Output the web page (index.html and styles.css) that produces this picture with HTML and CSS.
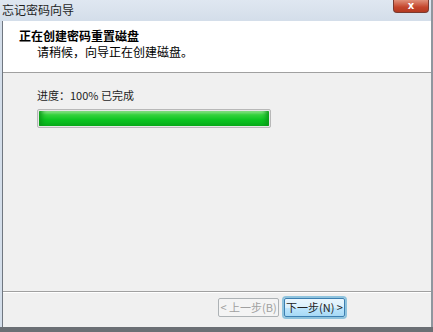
FILE: index.html
```html
<!DOCTYPE html>
<html>
<head>
<meta charset="utf-8">
<link rel="stylesheet" href="styles.css">
</head>
<body>
<div class="window">
  <div class="titlebar">
    <span class="title">忘记密码向导</span>
    <div class="close"><span>x</span></div>
  </div>
  <div class="frame">
    <div class="header">
      <div class="h-title">正在创建密码重置磁盘</div>
      <div class="h-sub">请稍候，向导正在创建磁盘。</div>
    </div>
    <div class="content">
      <div class="label">进度：100% 已完成</div>
      <div class="bar"><div class="fill"></div></div>
    </div>
    <div class="footer">
      <div class="btn disabled">&lt; 上一步(B)</div>
      <div class="btn focus">下一步(N) &gt;</div>
    </div>
  </div>
</div>
</body>
</html>
```
FILE: styles.css
```css
html, body {
  margin: 0;
  padding: 0;
  width: 433px;
  height: 332px;
  overflow: hidden;
  background: #6b6f74;
  font-family: "Noto Sans CJK SC", "Liberation Sans", sans-serif;
}
.window {
  width: 431px;
  height: 327px;
  background: linear-gradient(#dfe7f1, #d4deea 20px);
  display: flex;
  flex-direction: column;
  border-right: 2px solid #8f969e;
}
.titlebar {
  height: 21px;
  display: flex;
  align-items: flex-start;
  justify-content: space-between;
  position: relative;
}
.title {
  font-size: 12px;
  line-height: 12px;
  color: #1e1e1e;
  padding: 4px 0 0 2px;
}
.close {
  width: 34px;
  height: 12px;
  margin-right: 2px;
  background: linear-gradient(#e0907a, #c4452c 60%, #b33a22);
  border: 1px solid #7a3a30;
  border-top: none;
  border-radius: 0 0 4px 4px;
  display: flex;
  justify-content: center;
  align-items: center;
  color: #fff;
  font-family: "DejaVu Sans", sans-serif;
  font-weight: bold;
  font-size: 10px;
  line-height: 10px;
}
.frame {
  flex: 1;
  margin-left: 2px;
  border-left: 1px solid #707780;
  background: #f0f0f0;
  display: flex;
  flex-direction: column;
}
.header {
  background: #fff;
  height: 52px;
  border-bottom: 1px solid #a0a0a0;
  box-sizing: border-box;
  padding: 8px 0 0 16px;
}
.h-title {
  font-size: 12px;
  line-height: 14px;
  font-weight: bold;
  color: #000;
}
.h-sub {
  font-size: 12px;
  line-height: 14px;
  color: #000;
  margin: 2px 0 0 18px;
}
.content {
  flex: 1;
  padding: 15px 0 0 34px;
  border-bottom: 1px solid #a0a0a0;
  box-shadow: 0 1px 0 #fff;
}
.label {
  font-size: 11px;
  line-height: 14px;
  color: #1e1e1e;
}
.bar {
  margin-top: 7px;
  width: 234px;
  height: 19px;
  box-sizing: border-box;
  border: 1px solid #b8b8b8;
  border-radius: 2px;
  background: #e6e6e6;
  padding: 1px;
}
.fill {
  height: 100%;
  border-radius: 1px;
  background: linear-gradient(#9ee89a 0, #35d23d 25%, #0bc420 60%, #0aad1c 100%);
  box-shadow: inset 6px 0 5px -3px #0a9a18, inset -6px 0 5px -3px #0a9a18;
}
.footer {
  height: 35px;
  display: flex;
  justify-content: flex-start;
  padding: 6px 0 0 215px;
  gap: 5px;
  box-sizing: border-box;
}
.btn {
  width: 61px;
  height: 19px;
  box-sizing: border-box;
  border: 1px solid #adb2b5;
  border-radius: 2px;
  background: #f4f4f4;
  font-size: 11px;
  line-height: 17px;
  text-align: center;
  color: #222;
}
.btn.disabled {
  color: #a0a0a0;
}
.btn.focus {
  border-color: #3c7fb1;
  box-shadow: 0 0 0 2px #8fc3dd;
  background: linear-gradient(#eaf6fd, #d9f0fc 50%, #bee6fd 51%, #a7d9f5);
}
```
